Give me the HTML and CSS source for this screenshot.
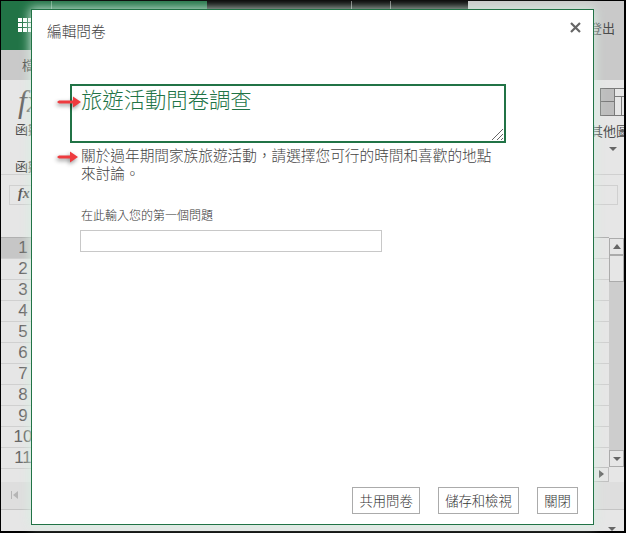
FILE: index.html
```html
<!DOCTYPE html>
<html lang="en">
<head>
    <meta charset="UTF-8">
    <title>編輯問卷</title>
    <link rel="stylesheet" href="styles.css">
</head>
<body>

    <!-- Workbook behind the dialog -->
    <div class="app">
        <div class="title-bar">
            <div class="title-green">
                <svg class="waffle" width="13" height="15" viewBox="0 0 13 15">
                    <path fill="#fff" d="M0 0h4v4H0zM5 0h4v4H5zM10 0h3v4h-3zM0 5h4v4H0zM5 5h4v4H5zM10 5h3v4h-3zM0 10h4v4H0zM5 10h4v4H5zM10 10h3v4h-3z"/>
                </svg>
            </div>
            <div class="title-dark"></div>
            <div class="title-grey"><span class="signout">登出</span></div>
        </div>
        <div class="ribbon-tabs">
            <span class="tab-left">檔</span>
            <div class="tabs-grey"></div>
        </div>
        <div class="ribbon">
            <div class="ribbon-left">
                <span class="fx-big">fx</span>
                <span class="ribbon-label">函數</span>
            </div>
            <div class="ribbon-right">
                <svg width="32" height="28" viewBox="0 0 32 28">
                    <rect x="0.5" y="0.5" width="32" height="27" fill="#e6e6e6" stroke="#7a7a7a"/>
                    <rect x="1" y="1" width="13" height="26" fill="#bdbdbd"/>
                    <path fill="none" stroke="#7a7a7a" d="M0 13.5h14M14.5 0v28M14 8.5h18M21.5 8v20"/>
                </svg>
                <span class="ribbon-label">其他圖</span>
                <span class="caret"></span>
            </div>
        </div>
        <div class="group-row"><span class="group-left">函數</span></div>
        <div class="formula-row">
            <div class="fx-box">fx</div>
            <div class="formula-input"></div>
        </div>
        <div class="sheet">
            <div class="row-heads">
                <div class="row-head selected">1</div>
                <div class="row-head">2</div>
                <div class="row-head">3</div>
                <div class="row-head">4</div>
                <div class="row-head">5</div>
                <div class="row-head">6</div>
                <div class="row-head">7</div>
                <div class="row-head">8</div>
                <div class="row-head">9</div>
                <div class="row-head">10</div>
                <div class="row-head">11</div>
            </div>
            <div class="cells">
                <div class="cell-rows">
                    <div class="cell-row"></div>
                    <div class="cell-row"></div>
                    <div class="cell-row"></div>
                    <div class="cell-row"></div>
                    <div class="cell-row"></div>
                    <div class="cell-row"></div>
                    <div class="cell-row"></div>
                    <div class="cell-row"></div>
                    <div class="cell-row"></div>
                    <div class="cell-row"></div>
                </div>
                <div class="arrow-right-box"><span class="tri-right"></span></div>
            </div>
            <div class="vscroll">
                <div class="scroll-btn"><span class="tri-up"></span></div>
                <div class="scroll-thumb"></div>
                <div class="scroll-track"></div>
                <div class="scroll-btn"><span class="tri-down"></span></div>
            </div>
        </div>
        <div class="sheet-tabs">
            <span class="first-sheet"><i></i><b></b></span>
        </div>
        <div class="status-bar"><span class="tri-down"></span></div>
    </div>

    <!-- Edit survey dialog -->
    <div class="dialog">
        <div class="dialog-header">
            <h1>編輯問卷</h1>
            <svg class="close" width="11" height="11" viewBox="0 0 11 11">
                <path stroke="#666" stroke-width="2.2" d="M1 1l9 9M10 1l-9 9"/>
            </svg>
        </div>
        <div class="dialog-body">
            <div class="title-box">
                <span class="title-text">旅遊活動問卷調查</span>
                <svg class="grip" width="11" height="11" viewBox="0 0 11 11">
                    <path stroke="#666" fill="none" d="M0 11L11 0M5 11l6-6M9 11l2-2"/>
                </svg>
            </div>
            <p class="description">關於過年期間家族旅遊活動&#xFF0C;請選擇您可行的時間和喜歡的地點<br>來討論。</p>
            <label class="question-label">在此輸入您的第一個問題</label>
            <div class="question-input"></div>
        </div>
        <div class="dialog-footer">
            <button>共用問卷</button>
            <button>儲存和檢視</button>
            <button>關閉</button>
        </div>
    </div>

    <!-- Red arrows added on top of the screenshot -->
    <svg class="mark mark-title" width="28" height="14" viewBox="0 0 28 14">
        <path d="M1 7l2-1.5h14v-4l8 5.500-8 5.500v-4H3z" fill="#ee3b3f"/>
    </svg>
    <svg class="mark mark-desc" width="24" height="14" viewBox="0 0 24 14">
        <path d="M1 7l2-1.500h11v-4l8 5.500-8 5.500v-4H3z" fill="#ee3b3f"/>
    </svg>

</body>
</html>
```

FILE: styles.css
```css
* {
    box-sizing: border-box;
}

html, body {
    margin: 0;
    height: 100%;
    overflow: hidden;
}

body {
    font-family: "Noto Sans CJK TC", "Liberation Sans", sans-serif;
    color: #4a4a4a;
    background-color: #e6e6e6;
}

.app {
    width: 626px;
    height: 533px;
    display: flex;
    flex-direction: column;
    border: solid #000;
    border-width: 1px 2px 2px 1px;
    overflow: hidden;
}

.title-bar {
    height: 49px;
    display: flex;
}

.title-green {
    width: 206px;
    background: linear-gradient(#6aa585, #6aa585) 50px 0 / 1px 9px no-repeat #217346;
    padding: 17px 0 0 17px;
}

.waffle {
    display: block;
}

.title-dark {
    width: 261px;
    background:
        linear-gradient(#777, #777) 144px 0 / 1px 9px no-repeat,
        linear-gradient(#777, #777) 183px 0 / 1px 9px no-repeat,
        #000;
}

.title-grey {
    flex: 1;
    background-color: #c9c9c9;
    padding: 18px 0 0 121px;
    font-size: 13px;
    line-height: 18px;
}

.signout {
    white-space: nowrap;
}

.ribbon-tabs {
    height: 30px;
    display: flex;
    background-color: #c9c9c9;
    font-size: 13px;
    line-height: 30px;
}

.tab-left {
    padding-left: 21px;
    width: 40px;
}

.ribbon {
    height: 94px;
    display: flex;
    justify-content: space-between;
}

.ribbon-left {
    padding: 3px 0 0 14px;
    width: 40px;
    display: flex;
    flex-direction: column;
}

.fx-big {
    margin-bottom: 1px;
    padding-left: 3px;
    font-family: "Liberation Serif", serif;
    font-style: italic;
    font-size: 32px;
    line-height: 36px;
    color: #666;
}

.ribbon-label {
    font-size: 13px;
    line-height: 18px;
    white-space: nowrap;
}

.ribbon-right {
    width: 32px;
    padding-top: 8px;
    display: flex;
    flex-direction: column;
    align-items: flex-start;
    overflow: hidden;
    position: relative;
}

.ribbon-right svg {
    margin-left: 8px;
    flex: none;
}

.ribbon-right .ribbon-label {
    margin: 6px 0 0 -2px;
}

.caret {
    margin: 7px 0 0 17px;
    border: 4px solid transparent;
    border-top: 4px solid #666;
    border-bottom: 0;
}

.group-row {
    height: 0;
}

.group-left {
    display: block;
    padding-left: 14px;
    font-size: 13px;
    line-height: 18px;
    position: relative;
    top: -17px;
}

.formula-row {
    height: 63px;
    display: flex;
    justify-content: space-between;
    padding-top: 10px;
    border-top: 1px solid #d0d0d0;
}

.fx-box {
    margin-left: 8px;
    width: 40px;
    height: 20px;
    border: 1px solid #d0d0d0;
    padding-left: 8px;
    font-family: "Liberation Serif", serif;
    font-style: italic;
    font-weight: bold;
    font-size: 14px;
    line-height: 16px;
    color: #555;
}

.formula-input {
    width: 40px;
    height: 20px;
    margin-right: 6px;
    border: 1px solid #d0d0d0;
}

.sheet {
    height: 245px;
    display: flex;
}

.row-heads {
    width: 60px;
    border-top: 1px solid #b0b0b0;
}

.row-head {
    height: 21px;
    border-bottom: 1px solid #d0d0d0;
    padding-right: 16px;
    text-align: center;
    font-family: "Liberation Sans", sans-serif;
    font-size: 17px;
    line-height: 20px;
    color: #666;
}

.row-head.selected {
    background-color: #c6c6c6;
}

.cells {
    flex: 1;
    display: flex;
    flex-direction: column;
}

.cell-rows {
    flex: 1;
    border-top: 1px solid #b0b0b0;
}

.cell-row {
    height: 21px;
    border-bottom: 1px solid #d0d0d0;
}

.arrow-right-box {
    height: 15px;
    border: 1px solid #c0c0c0;
    text-align: right;
    padding: 2px 4px 0 0;
    line-height: 0;
}

.tri-right {
    display: inline-block;
    border: 4px solid transparent;
    border-left: 5px solid #666;
    border-right: 0;
}

.vscroll {
    width: 15px;
    padding: 1px 0 15px;
    display: flex;
    flex-direction: column;
}

.scroll-btn {
    height: 17px;
    border: 1px solid #ababab;
    background-color: #e6e6e6;
    display: flex;
    align-items: center;
    justify-content: center;
}

.scroll-thumb {
    height: 27px;
    border: 1px solid #ababab;
    background-color: #e6e6e6;
}

.scroll-track {
    flex: 1;
    background-color: #cdcdcd;
}

.tri-up {
    border: 4px solid transparent;
    border-bottom: 5px solid #666;
    border-top: 0;
}

.tri-down {
    display: inline-block;
    border: 4px solid transparent;
    border-top: 4px solid #666;
    border-bottom: 0;
}

.sheet-tabs {
    height: 28px;
    background-color: #dedede;
    border-bottom: 1px solid #c4c4c4;
    padding: 9px 0 0 10px;
}

.first-sheet {
    display: flex;
    align-items: center;
    height: 8px;
}

.first-sheet i {
    width: 1px;
    height: 8px;
    background-color: #b5b5b5;
}

.first-sheet b {
    border: 4px solid transparent;
    border-right: 5px solid #b5b5b5;
    border-left: 0;
    margin-left: 1px;
}

.status-bar {
    flex: 1;
    text-align: right;
    padding: 10px 8px 0 0;
    line-height: 8px;
}

.dialog {
    position: absolute;
    left: 31px;
    top: 9px;
    width: 563px;
    height: 516px;
    background-color: #fff;
    border: 1px solid #217346;
    box-shadow: 0 0 10px 1px rgba(215, 238, 225, 0.95);
    display: flex;
    flex-direction: column;
}

.dialog-header {
    height: 43px;
    flex: none;
    display: flex;
    align-items: center;
    justify-content: space-between;
    padding: 0 12px 0 15px;
}

.dialog-header h1 {
    margin: 0 0 2px;
    font-size: 14.67px;
    font-weight: 300;
    line-height: 40px;
    color: #444;
}

.close {
    margin-bottom: 8px;
}

.dialog-body {
    flex: 1;
    padding: 31px 0 0 38px;
}

.title-box {
    position: relative;
    width: 436px;
    height: 59px;
    border: 2px solid #217346;
    padding-left: 9px;
    font-size: 21.33px;
    font-weight: 300;
    line-height: 26px;
    color: #217346;
}

.grip {
    position: absolute;
    right: 1px;
    bottom: 1px;
}

.description {
    margin: 3px 0 0 11px;
    font-size: 14.67px;
    font-weight: 300;
    line-height: 18px;
    color: #444;
}

.question-label {
    display: block;
    margin: 24px 0 0 11px;
    font-size: 12px;
    font-weight: 300;
    line-height: 18px;
    color: #333;
}

.question-input {
    width: 302px;
    height: 22px;
    margin: 6px 0 0 10px;
    border: 1px solid #c8c8c8;
}

.dialog-footer {
    display: flex;
    justify-content: flex-end;
    gap: 18px;
    padding: 0 15px 10px 0;
}

.dialog-footer button {
    height: 27px;
    padding: 0 6.2px;
    background-color: #fff;
    border: 1px solid #ababab;
    font-family: inherit;
    font-size: 13.33px;
    font-weight: 300;
    color: #333;
}

.mark {
    position: absolute;
    filter: drop-shadow(-1px 2px 2px rgba(0, 0, 0, 0.45));
}

.mark-title {
    left: 56px;
    top: 95px;
}

.mark-desc {
    left: 56px;
    top: 150px;
}
```
